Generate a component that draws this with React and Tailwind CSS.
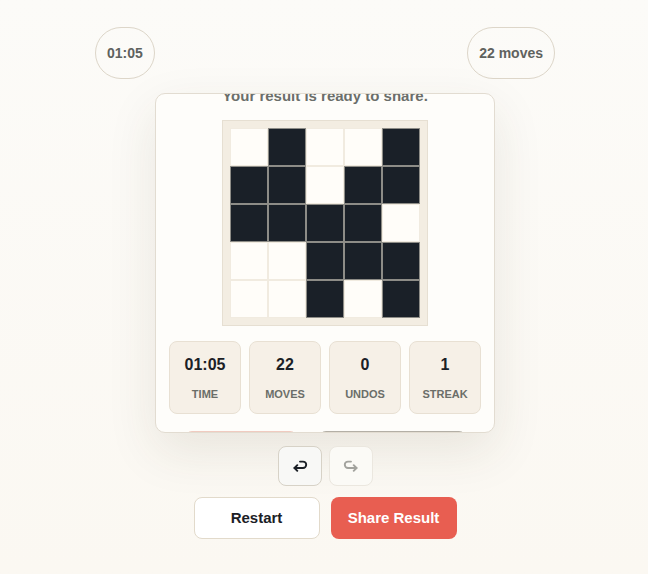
import React from "react";

const GRID = [
  [0, 1, 0, 0, 1],
  [1, 1, 0, 1, 1],
  [1, 1, 1, 1, 0],
  [0, 0, 1, 1, 1],
  [0, 0, 1, 0, 1],
];

const STATS = [
  { v: "01:05", l: "TIME" },
  { v: "22", l: "MOVES" },
  { v: "0", l: "UNDOS" },
  { v: "1", l: "STREAK" },
];

function UndoIcon({ color, flip }) {
  return (
    <svg
      width="16"
      height="12"
      viewBox="0 0 16 12"
      fill="none"
      stroke={color}
      strokeWidth="1.9"
      strokeLinecap="round"
      strokeLinejoin="round"
      style={flip ? { transform: "scaleX(-1)" } : undefined}
    >
      <path d="M8 1.6 H11 A3.2 3.2 0 0 1 11 8 H2.5" />
      <path d="M5.3 5.2 L2.5 8 L5.3 10.8" />
    </svg>
  );
}

export default function App() {
  return (
    <div
      className="min-h-screen w-full bg-gradient-to-b from-[#fcfbf8] to-[#fbf8f2] flex flex-col items-center pt-[27px] pl-[2px]"
      style={{ fontFamily: '"Liberation Sans", Arial, sans-serif' }}
    >
      <div className="w-[460px] flex justify-between">
        <div className="h-[52px] px-[11px] flex items-center rounded-full border border-[#ddd6c9] text-[14px] font-bold text-[#5f625e]">
          01:05
        </div>
        <div className="h-[52px] px-[11px] flex items-center rounded-full border border-[#ddd6c9] text-[14px] font-bold text-[#5f625e]">
          22 moves
        </div>
      </div>

      <div className="mt-[14px] w-[340px] h-[340px] overflow-hidden rounded-[10px] border border-[#e2dcd1] bg-[#fefdfa] shadow-[0_18px_50px_rgba(70,55,30,0.10)]">
        <div className="-mt-[8px] px-[13px] flex flex-col">
          <p className="text-center text-[15px] leading-[20px] font-bold text-[#6b6e6a]">
            Your result is ready to share.
          </p>
          <div className="mt-[14px] mx-auto w-[206px] h-[206px] border border-[#e6dfd2] bg-[#f3ede2] p-[7px] grid grid-cols-5">
            {GRID.flat().map((c, i) => (
              <div
                key={i}
                className={
                  c
                    ? "w-[38px] h-[38px] bg-[#1a2028] border border-[#8d8c87]"
                    : "w-[38px] h-[38px] bg-[#fffdf9] border border-[#f1ebe0]"
                }
              />
            ))}
          </div>
          <div className="mt-[15px] grid grid-cols-4 gap-[8px]">
            {STATS.map((s) => (
              <div
                key={s.l}
                className="rounded-[8px] border border-[#e8e0d3] bg-[#f6f0e7] pt-[11px] pb-[11px] flex flex-col items-center"
              >
                <div className="text-[16px] leading-[24px] font-bold text-[#1b2026]">{s.v}</div>
                <div className="mt-[9px] text-[11px] leading-[16px] font-bold text-[#6b6e69]">{s.l}</div>
              </div>
            ))}
          </div>
          <div className="mt-[17px] flex justify-center gap-[20px]">
            <div className="w-[114px] h-[40px] rounded-[8px] border border-[#f0cbc0] bg-[#fdf1ed]" />
            <div className="w-[149px] h-[40px] rounded-[8px] border border-[#b3afa6] bg-[#f4f1ea]" />
          </div>
        </div>
      </div>

      <div className="mt-[13px] flex gap-[7px]">
        <button className="w-[44px] h-[40px] rounded-[8px] border border-[#d7d2c7] bg-[#f8f8f6] flex items-center justify-center">
          <UndoIcon color="#1b2026" />
        </button>
        <button className="w-[44px] h-[40px] rounded-[8px] border border-[#ebe7df] bg-[#fbfaf6] flex items-center justify-center">
          <UndoIcon color="#a3a39e" flip />
        </button>
      </div>

      <div className="mt-[11px] flex gap-[11px]">
        <button className="w-[126px] h-[42px] rounded-[8px] border border-[#e2dacb] bg-white text-[15px] font-bold text-[#1b2026]">
          Restart
        </button>
        <button className="w-[126px] h-[42px] rounded-[8px] bg-[#e85e51] text-[15px] font-bold text-white">
          Share Result
        </button>
      </div>
    </div>
  );
}
